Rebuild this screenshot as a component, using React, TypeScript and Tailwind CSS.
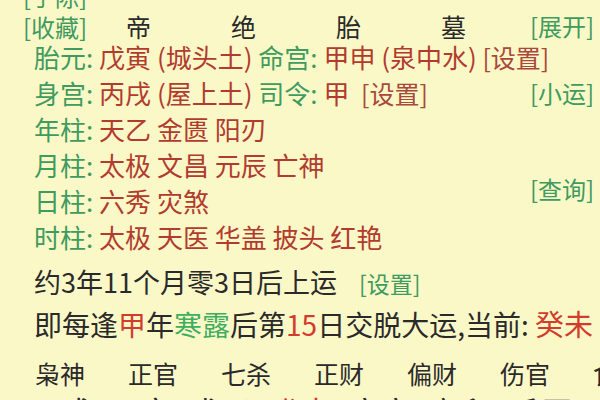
import React from "react";

const G = "text-[#3f9b5f]";
const R = "text-[#b23b2f]";

function PillarRow({ label, items, extra }: { label: string; items: string; extra?: React.ReactNode }) {
  return (
    <div className="h-[36px] leading-[36px] pl-[34px] whitespace-nowrap text-[26px]">
      <span className={G}>{label}: </span>
      <span className={R}>{items}</span>
      {extra}
    </div>
  );
}

export default function App() {
  const gods = ["枭神", "正官", "七杀", "正财", "偏财", "伤官", "食神"];
  const yun = ["丙戌", "丁亥", "戊子", "癸未", "庚寅", "辛卯", "壬辰"];

  return (
    <div className="w-[600px] h-[400px] overflow-hidden bg-[#fbf8c8] text-[#2a2a2a] text-[24px] font-['Noto_Sans_CJK_SC','Noto_Sans_CJK_JP',sans-serif]">
      <div className="-mt-[22px] flex">
        <div className="flex-1 min-w-0">
          <div className={`h-[36px] leading-[36px] pl-[23px] whitespace-nowrap ${G}`}>[手陈]</div>
          <div className="h-[25px] leading-[25px] pl-[23px] flex whitespace-nowrap">
            <span className={`w-[63px] shrink-0 ${G}`}>[收藏]</span>
            <div className="grid grid-cols-4 w-[420px] shrink-0 text-center text-[25px]">
              <span>帝</span>
              <span>绝</span>
              <span>胎</span>
              <span>墓</span>
            </div>
          </div>
          <PillarRow
            label="胎元"
            items="戊寅 (城头土)"
            extra={
              <>
                <span className={G}> 命宫: </span>
                <span className={R}>甲申 (泉中水)</span>
                <span className="text-[#a9483b] text-[25px]"> [设置]</span>
              </>
            }
          />
          <PillarRow
            label="身宫"
            items="丙戌 (屋上土)"
            extra={
              <>
                <span className={G}> 司令: </span>
                <span className={R}>甲</span>
                <span className="text-[#a9483b] text-[25px] ml-[6px]"> [设置]</span>
              </>
            }
          />
          <PillarRow label="年柱" items="天乙 金匮 阳刃" />
          <PillarRow label="月柱" items="太极 文昌 元辰 亡神" />
          <PillarRow label="日柱" items="六秀 灾煞" />
          <PillarRow label="时柱" items="太极 天医 华盖 披头 红艳" />
        </div>
        <div className={`w-[70px] shrink-0 flex flex-col whitespace-nowrap ${G}`}>
          <span className="mt-[30px] h-[36px] leading-[36px]">[展开]</span>
          <span className="mt-[31px] h-[36px] leading-[36px]">[小运]</span>
          <span className="mt-[60px] h-[36px] leading-[36px]">[查询]</span>
        </div>
      </div>

      <div className="mt-[9px] h-[36px] leading-[36px] pl-[34px] whitespace-nowrap text-[27px]">
        约3年11个月零3日后上运
        <span className={`text-[23px] ml-[22px] ${G}`}>[设置]</span>
      </div>

      <div className="mt-[5px] h-[36px] leading-[36px] pl-[34px] whitespace-nowrap text-[28px]">
        即每逢<span className="text-[#d23c2c]">甲</span>年<span className="text-[#3fae5f]">寒露</span>后第
        <span className="text-[#d23c2c]">15</span>日交脱大运,当前:{" "}
        <span className="text-[#d23c2c] text-[29px]">癸未</span>
      </div>

      <div className="mt-[14px] h-[36px] leading-[36px] pl-[35px] flex whitespace-nowrap text-[25px]">
        {gods.map((g) => (
          <span key={g} className="w-[93px] shrink-0">
            {g}
          </span>
        ))}
      </div>

      <div className="h-[40px] leading-[40px] pl-[28px] flex whitespace-nowrap text-[32px]">
        {yun.map((y, i) => (
          <span key={y} className={`w-[80px] shrink-0 ${i === 3 ? "text-[#d23c2c]" : ""}`}>
            {y}
          </span>
        ))}
      </div>
    </div>
  );
}
